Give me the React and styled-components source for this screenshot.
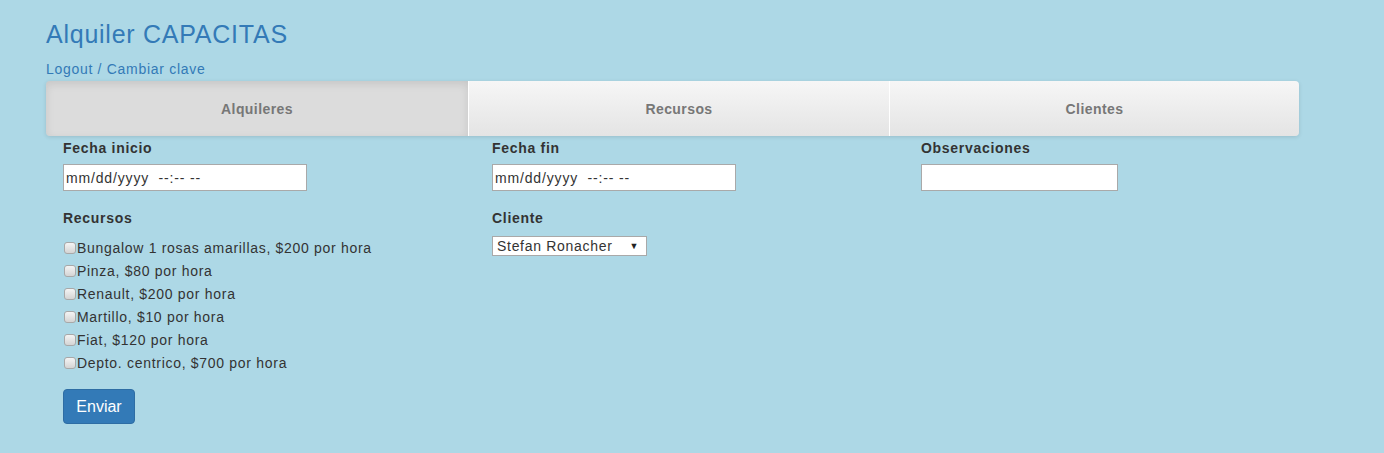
import React from 'react';
import styled, { createGlobalStyle } from 'styled-components';

const GlobalStyle = createGlobalStyle`
	html, body {
		margin:0;
		padding:0;
		background:#add8e6;
		font-family:"Liberation Sans", Arial, sans-serif;
		font-size:14px;
		line-height:20px;
		letter-spacing:0.05em;
		color:#333;
	}
`

const Page = styled.div`
	padding:17px 85px 30px 46px;
`

const Title = styled.h1`
	margin:0;
	font-size:25px;
	font-weight:normal;
	line-height:34px;
	letter-spacing:0.03em;
	color:#337ab7;
`

const UserLinks = styled.div`
	margin-top:8px;
	height:22px;
	color:#337ab7;
	a {
		color:#337ab7;
		text-decoration:none;
	}
`

const Tabs = styled.nav`
	display:grid;
	grid-template-columns:422px 421px 410px;
	width:1253px;
	height:55px;
	border-radius:4px;
	box-shadow:0 1px 4px rgba(0,0,0,.12);
	overflow:hidden;
`

const Tab = styled.a`
	display:flex;
	align-items:center;
	justify-content:center;
	font-weight:bold;
	letter-spacing:0.03em;
	color:#777;
	text-decoration:none;
	border-left:${props => props.first ? 'none' : '1px solid #fff'};
	background:${props => props.active ? '#dcdcdc' : 'linear-gradient(#f6f6f6, #e4e4e4)'};
	box-shadow:${props => props.active ? 'inset 0 3px 9px rgba(0,0,0,.1)' : 'none'};
`

const Form = styled.form`
	display:grid;
	grid-template-columns:repeat(3, 429px);
	margin-left:2px;
	padding-top:2px;
`

const Column = styled.div`
	padding:0 15px;
`

const Group = styled.div`
	margin-bottom:${props => props.last ? '0' : '17px'};
`

const Label = styled.label`
	display:block;
	font-weight:bold;
	margin-bottom:${props => props.tight ? '8px' : '6px'};
`

const TextInput = styled.input`
	display:block;
	box-sizing:border-box;
	width:${props => props.wide ? '244px' : '197px'};
	height:27px;
	margin:0;
	padding:1px 2px;
	border:1px solid #a9a9a9;
	background:#fff;
	font-family:"Liberation Sans", Arial, sans-serif;
	font-size:14px;
	letter-spacing:0.06em;
	color:#333;
	outline:none;
`

const CheckRow = styled.label`
	display:flex;
	align-items:center;
	height:23px;
	white-space:nowrap;
`

const CheckBox = styled.span`
	display:inline-block;
	flex:0 0 12px;
	box-sizing:border-box;
	width:12px;
	height:12px;
	margin:1px 1px 0 1px;
	border:1px solid #a8a8a8;
	border-radius:3px;
	background:linear-gradient(#f4f4f4, #d4d4d4);
`

const SelectBox = styled.div`
	position:relative;
	box-sizing:border-box;
	width:155px;
	height:20px;
	padding:0 0 0 4px;
	border:1px solid #a9a9a9;
	background:#fff;
	line-height:18px;
	font-size:14px;
	color:#333;
	&::after {
		content:'▼';
		position:absolute;
		right:7px;
		top:0;
		font-size:9px;
		color:#222;
	}
`

const SubmitButton = styled.button`
	margin-top:15px;
	box-sizing:border-box;
	width:72px;
	height:35px;
	padding:0;
	border:1px solid #2e6da4;
	border-radius:4px;
	background:#337ab7;
	color:#fff;
	font-family:"Liberation Sans", Arial, sans-serif;
	font-size:16px;
`

const recursos = [
	'Bungalow 1 rosas amarillas, $200 por hora',
	'Pinza, $80 por hora',
	'Renault, $200 por hora',
	'Martillo, $10 por hora',
	'Fiat, $120 por hora',
	'Depto. centrico, $700 por hora',
]

export default function App(){
	return (
		<Page>
			<GlobalStyle />
			<Title>Alquiler CAPACITAS</Title>
			<UserLinks>
				<a href="#">Logout</a> / <a href="#">Cambiar clave</a>
			</UserLinks>
			<Tabs>
				<Tab first active>Alquileres</Tab>
				<Tab>Recursos</Tab>
				<Tab>Clientes</Tab>
			</Tabs>
			<Form onSubmit={e => e.preventDefault()}>
				<Column>
					<Group>
						<Label>Fecha inicio</Label>
						<TextInput wide readOnly value="mm/dd/yyyy  --:-- --" />
					</Group>
					<Group last>
						<Label tight>Recursos</Label>
						{recursos.map(r => (
							<CheckRow key={r}>
								<CheckBox role="checkbox" aria-checked="false" />
								{r}
							</CheckRow>
						))}
					</Group>
					<SubmitButton type="submit">Enviar</SubmitButton>
				</Column>
				<Column>
					<Group>
						<Label>Fecha fin</Label>
						<TextInput wide readOnly value="mm/dd/yyyy  --:-- --" />
					</Group>
					<Group>
						<Label tight>Cliente</Label>
						<SelectBox>Stefan Ronacher</SelectBox>
					</Group>
				</Column>
				<Column>
					<Group>
						<Label>Observaciones</Label>
						<TextInput />
					</Group>
				</Column>
			</Form>
		</Page>
	)
}
